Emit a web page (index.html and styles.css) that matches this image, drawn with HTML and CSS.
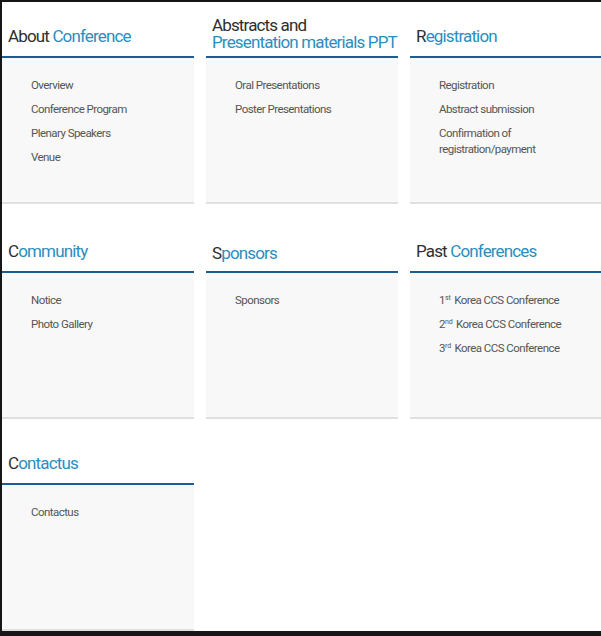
FILE: index.html
```html
<!DOCTYPE html>
<html lang="en">
<head>
<meta charset="utf-8">
<title>Sitemap</title>
<link rel="stylesheet" href="styles.css">
</head>
<body>
<div class="page">
  <div class="grid">
    <section class="card">
      <h2 class="card-head"><span class="dark">About</span>&nbsp;<span class="blue">Conference</span></h2>
      <div class="card-body">
        <ul class="menu">
          <li>Overview</li>
          <li>Conference Program</li>
          <li>Plenary Speakers</li>
          <li>Venue</li>
        </ul>
      </div>
    </section>
    <section class="card">
      <h2 class="card-head card-head--two"><span class="dark">Abstracts and</span><span class="blue">Presentation materials PPT</span></h2>
      <div class="card-body">
        <ul class="menu">
          <li>Oral Presentations</li>
          <li>Poster Presentations</li>
        </ul>
      </div>
    </section>
    <section class="card">
      <h2 class="card-head"><span class="dark">R</span><span class="blue">egistration</span></h2>
      <div class="card-body">
        <ul class="menu">
          <li>Registration</li>
          <li>Abstract submission</li>
          <li>Confirmation of registration/payment</li>
        </ul>
      </div>
    </section>

    <section class="card card--row2">
      <h2 class="card-head"><span class="dark">C</span><span class="blue">ommunity</span></h2>
      <div class="card-body">
        <ul class="menu">
          <li>Notice</li>
          <li>Photo Gallery</li>
        </ul>
      </div>
    </section>
    <section class="card card--row2">
      <h2 class="card-head card-head--low"><span class="dark">S</span><span class="blue">ponsors</span></h2>
      <div class="card-body">
        <ul class="menu">
          <li>Sponsors</li>
        </ul>
      </div>
    </section>
    <section class="card card--row2">
      <h2 class="card-head"><span class="dark">Past</span>&nbsp;<span class="blue">Conferences</span></h2>
      <div class="card-body">
        <ul class="menu">
          <li>1<sup>st</sup> Korea CCS Conference</li>
          <li>2<sup>nd</sup> Korea CCS Conference</li>
          <li>3<sup>rd</sup> Korea CCS Conference</li>
        </ul>
      </div>
    </section>

    <section class="card">
      <h2 class="card-head"><span class="dark">C</span><span class="blue">ontactus</span></h2>
      <div class="card-body">
        <ul class="menu">
          <li>Contactus</li>
        </ul>
      </div>
    </section>
  </div>
</div>
</body>
</html>
```

FILE: styles.css
```css
html, body {
  margin: 0;
  padding: 0;
}

body {
  background: #161616;
  font-family: Roboto, "Liberation Sans", Arial, sans-serif;
  overflow: hidden;
}

.page {
  margin: 2px 0 0 2px;
  width: 599px;
  height: 629px;
  background: #ffffff;
  overflow: hidden;
}

.grid {
  display: grid;
  grid-template-columns: 192px 192px 192px;
  column-gap: 12px;
  row-gap: 10px;
  align-content: start;
}

.card {
  display: flex;
  flex-direction: column;
}

.card--row2 {
  padding-top: 3px;
}

.card-head {
  margin: 0;
  height: 56px;
  box-sizing: border-box;
  padding: 0 0 12px 6px;
  display: flex;
  flex-direction: row;
  align-items: flex-end;
  font-size: 17px;
  line-height: 16px;
  font-weight: 400;
  letter-spacing: -0.85px;
  border-bottom: 2px solid #1d5c92;
  white-space: nowrap;
}

.card-head--two {
  flex-direction: column;
  align-items: flex-start;
  justify-content: flex-end;
  line-height: 17px;
  padding-bottom: 5px;
}

.card-head--low {
  padding-bottom: 10px;
}

.dark {
  color: #2e2e2e;
}

.blue {
  color: #2b8dc0;
}

.card-body {
  height: 146px;
  box-sizing: border-box;
  background: #f8f8f8;
  border-bottom: 2px solid #e0e0e0;
  padding: 19px 0 0 29px;
}

.menu {
  list-style: none;
  margin: 0;
  padding: 0;
  max-width: 140px;
}

.menu li {
  font-size: 11.5px;
  line-height: 16px;
  letter-spacing: -0.55px;
  color: #555555;
}

.menu li + li {
  margin-top: 8px;
}

.menu sup {
  font-size: 7px;
  line-height: 0;
  letter-spacing: 0;
  vertical-align: 4px;
  margin-right: 1px;
}
```
